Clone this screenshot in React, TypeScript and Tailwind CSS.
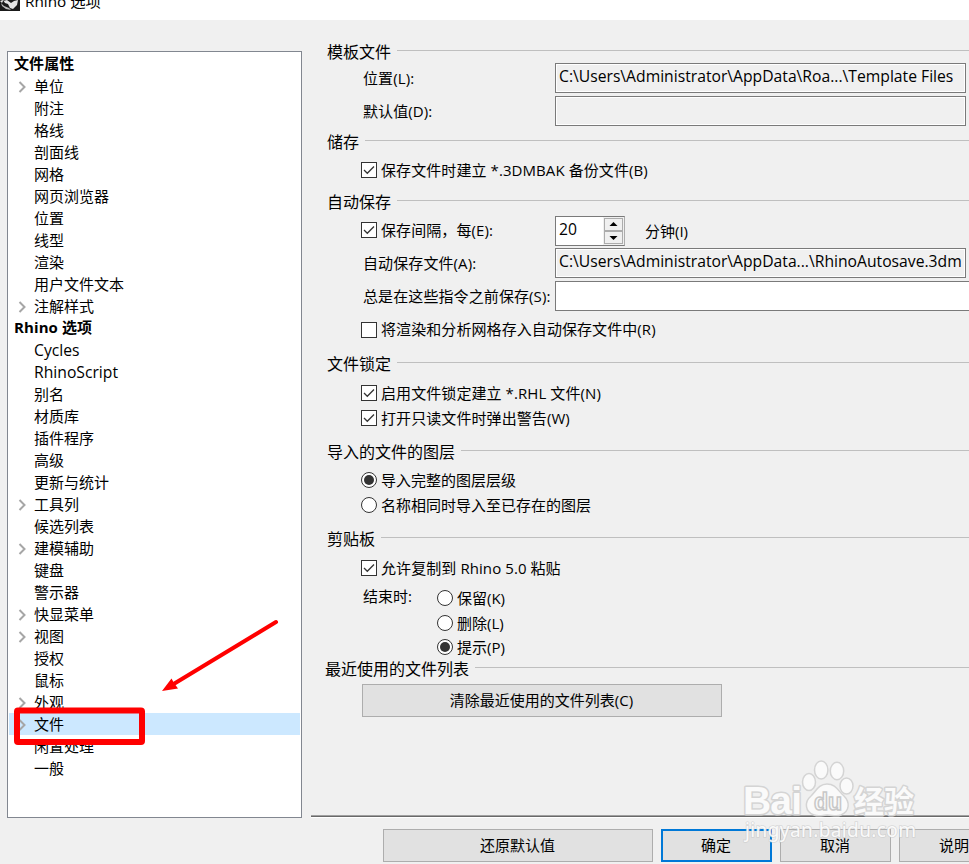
import React from "react";

interface TreeItem {
  label: string;
  heading?: boolean;
  expandable?: boolean;
  selected?: boolean;
  latin?: boolean;
}

const treeItems: TreeItem[] = [
  { label: "文件属性", heading: true },
  { label: "单位", expandable: true },
  { label: "附注" },
  { label: "格线" },
  { label: "剖面线" },
  { label: "网格" },
  { label: "网页浏览器" },
  { label: "位置" },
  { label: "线型" },
  { label: "渲染" },
  { label: "用户文件文本" },
  { label: "注解样式", expandable: true },
  { label: "Rhino 选项", heading: true },
  { label: "Cycles", latin: true },
  { label: "RhinoScript", latin: true },
  { label: "别名" },
  { label: "材质库" },
  { label: "插件程序" },
  { label: "高级" },
  { label: "更新与统计" },
  { label: "工具列", expandable: true },
  { label: "候选列表" },
  { label: "建模辅助", expandable: true },
  { label: "键盘" },
  { label: "警示器" },
  { label: "快显菜单", expandable: true },
  { label: "视图", expandable: true },
  { label: "授权" },
  { label: "鼠标" },
  { label: "外观", expandable: true },
  { label: "文件", expandable: true, selected: true },
  { label: "闲置处理" },
  { label: "一般" },
];

const TreeRow: React.FC<{ item: TreeItem }> = ({ item }) => {
  if (item.heading) {
    return <div className="h-[22px] pl-[5px] font-bold leading-[20px] tracking-[0.1px]">{item.label}</div>;
  }
  return (
    <div className={`flex h-[22px] items-center ${item.selected ? "bg-[#cce8ff]" : ""}`}>
      <span className="w-[25px] shrink-0 pl-[9px]">
        {item.expandable && (
          <svg width="9" height="12" viewBox="0 0 9 12" className="mt-[2px] block">
            <path d="M1.5 1 L6.5 6 L1.5 11" fill="none" stroke="#a6a6a6" strokeWidth="2" />
          </svg>
        )}
      </span>
      <span className={`leading-[22px] ${item.latin ? "text-[15.7px]" : ""}`}>{item.label}</span>
    </div>
  );
};

const SectionTitle: React.FC<{ title: string; className?: string }> = ({ title, className = "" }) => (
  <div className={`flex h-[22px] ${className}`}>
    <span className="text-[16px] leading-[22px]">{title}</span>
    <span className="ml-[6px] mt-[9px] h-px flex-1 bg-[#bfbfbf]" />
  </div>
);

const Field: React.FC<{ value?: string; className?: string }> = ({ value, className = "" }) => (
  <div
    className={`h-[30px] shrink-0 border border-[#7a7a7a] pl-[3px] text-[15.7px] leading-[25px] shadow-[inset_0_0_0_1px_#fff] ${className}`}
  >
    {value}
  </div>
);

const FieldRow: React.FC<{ label: string; className?: string; children: React.ReactNode }> = ({
  label,
  className = "",
  children,
}) => (
  <div className={`flex h-[30px] pl-9 ${className}`}>
    <span className="w-[192px] shrink-0 whitespace-nowrap leading-[31px] tracking-[0.1px]">{label}</span>
    {children}
  </div>
);

const Check: React.FC<{ label: string; checked?: boolean; className?: string }> = ({
  label,
  checked,
  className = "",
}) => (
  <div className={`flex h-5 items-center pl-[34px] ${className}`}>
    <svg width="16" height="16" viewBox="0 0 16 16" className="mr-1 shrink-0">
      <rect x="0.5" y="0.5" width="15" height="15" fill="#fff" stroke="#333" />
      {checked && <path d="M3 8 L6.3 11.3 L13 4.5" fill="none" stroke="#333" strokeWidth="1.3" />}
    </svg>
    <span className="leading-5 tracking-[0.08px]">{label}</span>
  </div>
);

const Radio: React.FC<{ label: string; checked?: boolean; className?: string }> = ({
  label,
  checked,
  className = "",
}) => (
  <div className={`flex h-5 items-center ${className}`}>
    <svg width="16" height="16" viewBox="0 0 16 16" className="mr-1 shrink-0">
      <circle cx="8" cy="8" r="7.5" fill="#fff" stroke="#333" />
      {checked && <circle cx="8" cy="8" r="5" fill="#333" />}
    </svg>
    <span className="leading-5">{label}</span>
  </div>
);

const Button: React.FC<{ label: string; className?: string }> = ({ label, className = "" }) => (
  <button className={`flex h-[33px] shrink-0 items-center justify-center bg-[#e1e1e1] pr-px ${className}`}>
    {label}
  </button>
);

const Spinner: React.FC = () => (
  <div className="flex h-[30px] w-[70px] border border-r-[#acacac] border-[#7a7a7a] bg-white">
    <span className="flex-1 pl-[3px] text-[15.7px] leading-[25px]">20</span>
    <svg width="21" height="28" viewBox="0 0 21 28">
      <rect width="21" height="28" fill="#f0f0f0" />
      <rect x="1.5" y="1.5" width="18" height="12" fill="#f0f0f0" stroke="#acacac" />
      <rect x="1.5" y="14.5" width="18" height="12" fill="#f0f0f0" stroke="#acacac" />
      <path d="M6.5 9 L10.5 5 L14.5 9 Z M6.5 19 L10.5 23 L14.5 19 Z" fill="#000" />
    </svg>
  </div>
);

const Watermark: React.FC = () => (
  <svg
    width="190"
    height="96"
    viewBox="0 0 190 96"
    className="pointer-events-none absolute left-[735px] top-[755px] font-['Liberation_Sans','Noto_Sans_CJK_SC',sans-serif]"
  >
    <g fill="#fafafa" stroke="#d4d4d4" strokeWidth="1.5">
      <g fontWeight="bold" strokeWidth="3" strokeLinejoin="round" paintOrder="stroke">
        <text x="8" y="59" fontSize="39" textLength="59">Bai</text>
        <text x="119" y="57" fontSize="30" textLength="60">经验</text>
      </g>
      <ellipse cx="74" cy="27" rx="6.5" ry="8.5" />
      <ellipse cx="86.2" cy="15" rx="6.7" ry="9" />
      <ellipse cx="102" cy="16" rx="6.7" ry="8.7" />
      <ellipse cx="111.5" cy="31" rx="6.5" ry="8" />
      <path d="M92 29 C84 29 81 36 76 41 C69 47 70 57 79 60 C84 62 88 60 92 60 C97 60 101 62 106 60 C115 56 115 47 109 41 C103 36 101 29 92 29 Z" />
      <text x="79" y="55" fontSize="23" fontWeight="bold" textLength="28" stroke="#c8c8c8">du</text>
    </g>
    <text
      x="10"
      y="82"
      fontSize="19"
      textLength="171"
      fill="#fff"
      fillOpacity="0.9"
      stroke="#c8c8c8"
      strokeOpacity="0.6"
      strokeWidth="1.6"
      paintOrder="stroke"
      className="font-['Noto_Sans',sans-serif]"
    >
      jingyan.baidu.com
    </text>
  </svg>
);

const App: React.FC = () => {
  return (
    <div className="relative flex h-[864px] w-[969px] flex-col overflow-hidden bg-[#f0f0f0] font-['Open_Sans','Noto_Sans_CJK_SC',sans-serif] text-[15px] text-black">
      <header className="flex h-5 shrink-0 bg-white">
        <svg width="20" height="11" viewBox="0 0 20 11">
          <rect width="20" height="11" fill="#1a1a1a" />
          <path d="M0 1 L3 0 L5 3 L8 4 L10 8 L13 9 L17 5 L18 0 L14 1 L11 3 L7 0 L3 1 L2 3 Z" fill="#e4e4e4" />
          <path d="M1 3 L4 6 L9 8 L11 10 L6 9 L2 6 Z" fill="#bdbdbd" />
        </svg>
        <span className="-mt-[10px] ml-[5px] text-[15.3px] leading-[22px]">Rhino 选项</span>
      </header>

      <div className="flex h-[795px] shrink-0">
        <nav className="ml-[7px] mt-[31px] h-[767px] w-[295px] shrink-0 border border-[#828790] bg-white px-px pt-px">
          {treeItems.map((item) => (
            <TreeRow key={item.label} item={item} />
          ))}
        </nav>

        <main className="ml-[25px] flex min-w-0 flex-1 flex-col pt-[21px]">
          <SectionTitle title="模板文件" />
          <FieldRow label="位置(L):">
            <Field value="C:\Users\Administrator\AppData\Roa...\Template Files" className="w-[411px]" />
          </FieldRow>
          <FieldRow label="默认值(D):" className="mt-[3px]">
            <Field className="w-[411px]" />
          </FieldRow>

          <SectionTitle title="储存" className="mt-[5px]" />
          <Check label="保存文件时建立 *.3DMBAK 备份文件(B)" checked className="mt-[7px]" />

          <SectionTitle title="自动保存" className="mt-[11px]" />
          <div className="mt-[3px] flex h-[30px]">
            <Check label="保存间隔，每(E):" checked className="mt-1 w-[228px]" />
            <Spinner />
            <span className="ml-5 leading-[30px]">分钟(I)</span>
          </div>
          <FieldRow label="自动保存文件(A):" className="mt-[2px]">
            <Field value="C:\Users\Administrator\AppData...\RhinoAutosave.3dm" className="w-[411px]" />
          </FieldRow>
          <FieldRow label="总是在这些指令之前保存(S):" className="mt-[3px]">
            <Field className="w-[430px] bg-white" />
          </FieldRow>
          <Check label="将渲染和分析网格存入自动保存文件中(R)" className="mt-[9px] [&>span]:-mt-[3px]" />

          <SectionTitle title="文件锁定" className="mt-[13px]" />
          <Check label="启用文件锁定建立 *.RHL 文件(N)" checked className="mt-2" />
          <Check label="打开只读文件时弹出警告(W)" checked className="mt-[5px]" />

          <SectionTitle title="导入的文件的图层" className="mt-[13px]" />
          <Radio label="导入完整的图层层级" checked className="mt-[7px] pl-[34px]" />
          <Radio label="名称相同时导入至已存在的图层" className="mt-[5px] pl-[34px]" />

          <SectionTitle title="剪贴板" className="mt-[13px]" />
          <Check label="允许复制到 Rhino 5.0 粘贴" checked className="mt-2" />
          <div className="mt-[10px] flex pl-9">
            <span className="w-[74px] leading-[16px]">结束时:</span>
            <div>
              <Radio label="保留(K)" />
              <Radio label="删除(L)" className="mt-[5px]" />
              <Radio label="提示(P)" checked className="mt-1" />
            </div>
          </div>

          <SectionTitle title="最近使用的文件列表" className="-ml-[2px] mt-px" />
          <Button label="清除最近使用的文件列表(C)" className="ml-[35px] mt-1 w-[360px] border border-[#adadad]" />
        </main>
      </div>

      <footer className="ml-[311px] shrink-0 border-t border-[#a0a0a0]">
        <div className="border-t border-[#696969]">
          <div className="flex gap-2 border-t border-white pl-[72px] pt-[11px]">
            <Button label="还原默认值" className="w-[270px] border border-[#adadad]" />
            <Button label="确定" className="w-[111px] border-2 border-[#0078d7]" />
            <Button label="取消" className="w-[111px] border border-[#adadad]" />
            <Button label="说明" className="w-[111px] border border-[#adadad]" />
          </div>
        </div>
      </footer>

      {/* red marker around the selected entry and the arrow pointing at it */}
      <svg width="290" height="150" className="pointer-events-none absolute left-0 top-[610px]">
        <rect x="17" y="100.5" width="125" height="31.5" rx="1" fill="none" stroke="#f00" strokeWidth="6" />
        <path d="M276 12 L172 75" stroke="#f00" strokeWidth="4" strokeLinecap="round" />
        <path d="M162 81 L171.5 68.5 L174 73 L178 78.5 Z" fill="#f00" />
      </svg>

      <Watermark />
    </div>
  );
};

export default App;
